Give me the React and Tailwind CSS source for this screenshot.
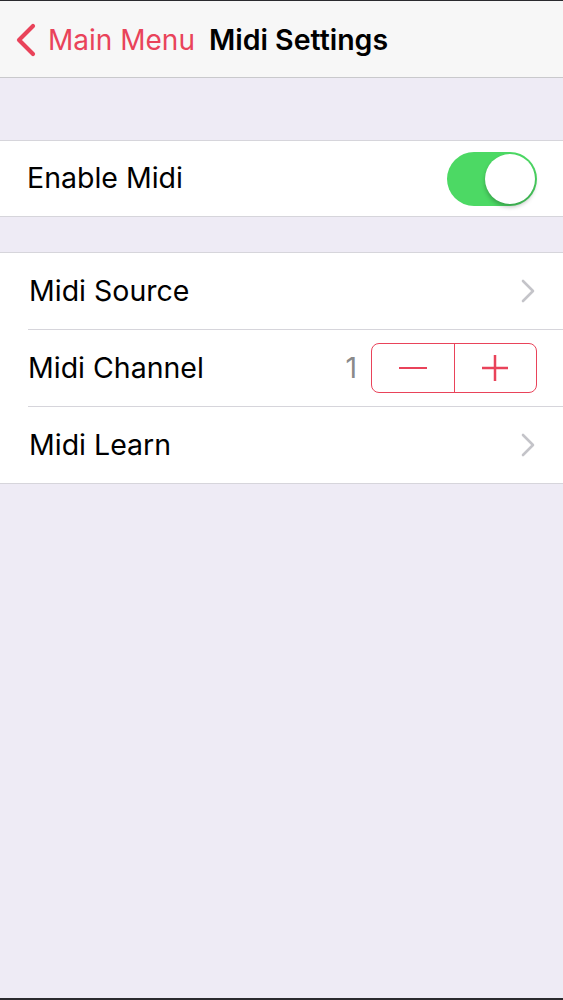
import React from "react";

function Chevron({ className }) {
  return (
    <svg width="16" height="24" viewBox="0 0 16 24" className={className} fill="none">
      <path d="M3 2 L13 12 L3 22" stroke="#c4c4c9" strokeWidth="2.6" strokeLinecap="round" strokeLinejoin="round" />
    </svg>
  );
}

export default function App() {
  return (
    <div
      className="w-[563px] h-[1000px] flex flex-col bg-[#eeebf5] border-t border-[#2a2a2e] border-b-2 border-b-[#2a2a2e] overflow-hidden"
      style={{ fontFamily: "Inter, 'Noto Sans', sans-serif" }}
    >
      <div className="h-[77px] shrink-0 bg-[#f7f7f7] border-b border-[#c9c9cc] flex items-center pt-[2px]">
        <svg width="26" height="34" viewBox="0 0 26 34" className="ml-[13px] mr-[9px]" fill="none">
          <path d="M20 3 L6 17 L20 31" stroke="#e9435a" strokeWidth="4.2" strokeLinecap="round" strokeLinejoin="round" />
        </svg>
        <span className="text-[28px] text-[#e9435a]">Main Menu</span>
        <span className="ml-[14px] text-[28.5px] font-semibold text-black">Midi Settings</span>
      </div>

      <div className="h-[62px] shrink-0" />

      <div className="bg-white border-t border-b border-[#d6d5db] h-[77px] shrink-0 flex items-center pl-[27px] pr-[26px]">
        <span className="text-[28.5px] text-black flex-1">Enable Midi</span>
        <div className="w-[90px] h-[54px] rounded-full bg-[#4cd964] flex items-center justify-end p-[2px]">
          <div className="w-[50px] h-[50px] rounded-full bg-white shadow-[0_3px_4px_rgba(0,0,0,0.25)]" />
        </div>
      </div>

      <div className="h-[35px] shrink-0" />

      <div className="bg-white border-t border-b border-[#d6d5db] shrink-0 flex flex-col">
        <div className="h-[76px] flex items-center pl-[29px] pr-[27px]">
          <span className="text-[28.5px] text-black flex-1">Midi Source</span>
          <Chevron />
        </div>
        <div className="ml-[28px] h-px bg-[#d6d5db]" />
        <div className="h-[76px] flex items-center pl-[28px] pr-[26px]">
          <span className="text-[28.5px] text-black flex-1">Midi Channel</span>
          <span className="text-[28.5px] text-[#8a8a8a] mr-[14px]">1</span>
          <div className="w-[166px] h-[50px] border-[1.5px] border-[#e9435a] rounded-[8px] flex">
            <div className="flex-1 flex items-center justify-center border-r-[1.5px] border-[#e9435a]">
              <div className="w-[28px] h-[2.5px] bg-[#e9435a]" />
            </div>
            <div className="flex-1 flex items-center justify-center">
              <svg width="28" height="28" viewBox="0 0 28 28">
                <path d="M14 1 V27 M1 14 H27" stroke="#e9435a" strokeWidth="2.5" />
              </svg>
            </div>
          </div>
        </div>
        <div className="ml-[28px] h-px bg-[#d6d5db]" />
        <div className="h-[76px] flex items-center pl-[29px] pr-[27px]">
          <span className="text-[28.5px] text-black flex-1">Midi Learn</span>
          <Chevron />
        </div>
      </div>

      <div className="flex-1" />
    </div>
  );
}
